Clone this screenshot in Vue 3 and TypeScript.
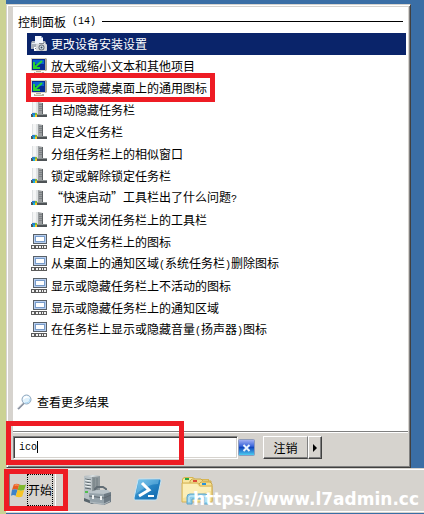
<script setup lang="ts">
import { computed, ref } from 'vue'

type IconKind = 'printer' | 'monitor' | 'tower' | 'tray'

interface ResultItem {
  label: string
  icon: IconKind
  marked?: boolean
}

interface TextPart {
  text: string
  narrow: boolean
}

const query = ref('ico')
const selected = ref(0)

const items: ResultItem[] = [
  { label: '更改设备安装设置', icon: 'printer' },
  { label: '放大或缩小文本和其他项目', icon: 'monitor' },
  { label: '显示或隐藏桌面上的通用图标', icon: 'monitor', marked: true },
  { label: '自动隐藏任务栏', icon: 'tower' },
  { label: '自定义任务栏', icon: 'tower' },
  { label: '分组任务栏上的相似窗口', icon: 'tower' },
  { label: '锁定或解除锁定任务栏', icon: 'tower' },
  { label: '“快速启动”工具栏出了什么问题?', icon: 'tower' },
  { label: '打开或关闭任务栏上的工具栏', icon: 'tower' },
  { label: '自定义任务栏上的图标', icon: 'tray' },
  { label: '从桌面上的通知区域(系统任务栏)删除图标', icon: 'tray' },
  { label: '显示或隐藏任务栏上不活动的图标', icon: 'tray' },
  { label: '显示或隐藏任务栏上的通知区域', icon: 'tray' },
  { label: '在任务栏上显示或隐藏音量(扬声器)图标', icon: 'tray' },
]

// Half-width characters are set in a monospaced face beside the full-width ones.
function split(label: string): TextPart[] {
  return (label.match(/[\x20-\x7e]+|[^\x20-\x7e]+/g) ?? []).map((text) => ({
    text,
    narrow: /^[\x20-\x7e]/.test(text),
  }))
}

const rows = computed(() => items.map((item) => ({ ...item, parts: split(item.label) })))
</script>

<template>
  <div class="desktop">
    <main class="start-menu">
      <section class="results">
        <h1 class="group-title">
          <span>控制面板</span>
          <span class="narrow">({{ items.length }})</span>
          <span class="rule"></span>
        </h1>
        <ul class="list">
          <li v-for="(row, index) in rows" :key="row.label" class="item">
            <button type="button" class="row" :class="{ selected: index === selected }" @click="selected = index">
              <svg v-if="row.icon === 'printer'" class="icon" viewBox="0 0 16 16" aria-hidden="true">
                <path d="M4 0h6l2 2v5H4z" fill="#f4f8ff" />
                <path d="M10 0v2h2z" fill="#9db4d4" />
                <path d="M1 5h3v2h8V5h2l1 2v6H0V7z" fill="#a9b0ba" />
                <path d="M1 7h13v1H1z" fill="#e9edf2" />
                <path d="M3 11h6v4H3z" fill="#fff" />
                <path d="M4 12h3v1H4z" fill="#748397" />
                <rect x="5" y="8" width="11" height="7" rx="1" fill="#d7d9dc" />
                <path d="M8 7h5v1H8z" fill="#828890" />
                <circle cx="10.500" cy="11.500" r="3" fill="#69717b" />
                <circle cx="10.500" cy="11.500" r="2" fill="#d5e5f1" />
                <circle cx="10.500" cy="11.500" r="1" fill="#37434f" />
              </svg>
              <svg v-else-if="row.icon === 'monitor'" class="icon" viewBox="0 0 16 16" aria-hidden="true">
                <path d="M0 0h15l1 1v11l-1 1H1l-1-1z" fill="#d5d1bd" />
                <path d="M14 0l2 1v11l-2 1z" fill="#aaa796" />
                <path d="M1 1h13v11H1z" fill="#072b94" />
                <path d="M2 2h11v4H2z" fill="#0a62d0" />
                <path d="M3 4v6h6M4 9l7-6" fill="none" stroke="#2bd52f" stroke-width="2" />
                <path d="M5 13h5v1h3v2H3v-2h2z" fill="#b5b19e" />
                <path d="M4 14h7v1H4z" fill="#ebe8d8" />
              </svg>
              <svg v-else-if="row.icon === 'tower'" class="icon" viewBox="0 0 16 16" aria-hidden="true">
                <path d="M1 0h6v13H1z" fill="#dfe2e3" />
                <path d="M2 0h3v10H2z" fill="#f5f6f6" />
                <path d="M7 0l5 1v12H7z" fill="#9a9ea0" />
                <path d="M8 2h3v1H8zM8 4h3v1H8zM8 6h3v1H8zM8 8h3v1H8z" fill="#7d8184" />
                <path d="M11 1h1v11h-1z" fill="#5e6265" />
                <path d="M0 12h16v3H0z" fill="#4e5356" />
                <path d="M6 12h10v1H6z" fill="#8e9495" />
                <path d="M1 11h3v2H1z" fill="#267fce" />
                <path d="M4 11h2v2H4z" fill="#83bd32" />
                <path d="M2 13h2v2H2z" fill="#14b5e0" />
                <path d="M4 13h2v2H4z" fill="#f8c629" />
              </svg>
              <svg v-else class="icon" viewBox="0 0 16 16" aria-hidden="true">
                <path d="M2 0h14v10H2z" fill="#596169" />
                <path d="M3 1h12v8H3z" fill="#b8cff0" />
                <path d="M4 2h10v6H4z" fill="#789cca" />
                <path d="M5 3h8v4H5z" fill="#fff" />
                <path d="M0 11h16v4H0z" fill="#5b5b5b" />
                <path d="M1 12h2v2H1zM5 12h2v2H5zM8 12h2v2H8zM11 12h1v2h-1zM13 12h2v2h-2z" fill="#f1f1f1" />
              </svg>
              <span class="label"><span v-for="(part, n) in row.parts" :key="n" :class="{ narrow: part.narrow }">{{ part.text }}</span></span>
            </button>
            <span v-if="row.marked" class="mark mark-item"></span>
          </li>
        </ul>
        <a class="more" href="#more">
          <svg class="icon" viewBox="0 0 16 16" aria-hidden="true">
            <path d="M1 15l6-6" stroke="#8992a1" stroke-width="2" />
            <path d="M1 14l5-5" stroke="#c7c9ce" />
            <circle cx="9.500" cy="5.500" r="4.500" fill="#dff1fc" stroke="#8fa6bd" />
            <path d="M6 6c0-5 6-5 6-2C9 3 8 5 6 6z" fill="#fff" />
            <path d="M8 9c3 0 5-1 5-4" fill="none" stroke="#a4d3f2" />
          </svg>
          <span>查看更多结果</span>
        </a>
      </section>

      <footer class="menu-footer">
        <div class="search">
          <input v-model="query" class="search-input" type="text" aria-label="搜索" />
          <span class="caret"></span>
        </div>
        <button type="button" class="clear" aria-label="清除" @click="query = ''">
          <svg viewBox="0 0 17 17" aria-hidden="true">
            <defs>
              <linearGradient id="clear-fill" x2="0" y2="1">
                <stop offset="0" stop-color="#a9b4f3" />
                <stop offset=".4" stop-color="#3e68dc" />
                <stop offset=".5" stop-color="#1247bd" />
                <stop offset="1" stop-color="#50d4f4" />
              </linearGradient>
            </defs>
            <rect x=".5" y=".5" width="16" height="16" rx="1" fill="url(#clear-fill)" stroke="#8d9bbb" />
            <path d="M5.500 6l6 6M11.500 6l-6 6" stroke="#e9f3ff" stroke-width="2" />
          </svg>
        </button>
        <div class="logoff">
          <button type="button" class="raised logoff-main">注销</button>
          <button type="button" class="raised logoff-more" aria-label="更多选项">
            <svg viewBox="0 0 4 8" aria-hidden="true"><path d="M0 0l4 4-4 4z" fill="#000" /></svg>
          </button>
        </div>
        <span class="mark mark-search"></span>
      </footer>
    </main>

    <nav class="taskbar" aria-label="任务栏">
      <div class="start-wrap">
        <button type="button" class="start">
          <svg class="flag" viewBox="0 0 16 16" aria-hidden="true">
            <path d="M3 2c2-1 4-1 6 0L7 8c-2-1-4-1-6 0z" fill="#e85e22" />
            <path d="M9 2c2 1 5 1 7 0l-2 6c-2 1-5 1-7 0z" fill="#7eb82d" />
            <path d="M1 8c2-1 4-1 6 0l-2 6c-2-1-3-1-5 0z" fill="#3c83ca" />
            <path d="M7 8c2 1 5 1 7 0l-2 7c-2 1-5 1-7 0z" fill="#f6c528" />
            <path d="M4 3c2-1 3 0 4 0" stroke="#ffb080" fill="none" />
          </svg>
          <span class="start-text">开始</span>
        </button>
        <span class="mark mark-start"></span>
      </div>

      <div class="launchers">
        <button type="button" class="launcher" aria-label="服务器管理器">
          <svg viewBox="0 0 32 32" aria-hidden="true">
            <path d="M3 2l9-1 7 1v25l-8 2-8-2z" fill="#8e979b" />
            <path d="M3 2l8 1v26l-8-2z" fill="#b9c1c5" />
            <path d="M3 2l9-1 7 1-8 1z" fill="#dce2e4" />
            <path d="M4 5l6 1M4 8l6 1M4 11l6 1M4 14l6 1" stroke="#59656b" />
            <path d="M4 6l6 1M4 9l6 1M4 12l6 1" stroke="#eef3f4" />
            <path d="M4 17h3v2H4z" fill="#53bd4e" />
            <path d="M13 4v14M16 4v14" stroke="#737e83" />
            <path d="M3 24l8 3 8-2v2l-8 3-8-3z" fill="#59656c" />
            <path d="M14 18v-3l2-2h6l3 2v3" fill="none" stroke="#626d75" stroke-width="2" />
            <path d="M9 18l6-2h12l3 3-6 3H10z" fill="#b9c3c9" />
            <path d="M8 19l15 1v11L9 29z" fill="#95a2aa" />
            <path d="M23 20l7-2v10l-7 3z" fill="#6d7a84" />
            <path d="M8 22l15 2 7-3" fill="none" stroke="#5e6971" />
            <path d="M11 21h2v4h-2zM19 22h2v4h-2z" fill="#eef1f2" />
            <path d="M9 28l14 2 6-3" fill="none" stroke="#b0babf" />
          </svg>
        </button>
        <button type="button" class="launcher" aria-label="PowerShell">
          <svg viewBox="0 0 32 32" aria-hidden="true">
            <defs>
              <linearGradient id="shell-fill" x2="1" y2="1">
                <stop offset="0" stop-color="#77c6ed" />
                <stop offset=".5" stop-color="#2683c3" />
                <stop offset="1" stop-color="#0c62a9" />
              </linearGradient>
            </defs>
            <path d="M8 5h21q1 0 1 2l-4 18q0 1-2 1H4q-1 0-1-2L7 6q0-1 1-1z" fill="url(#shell-fill)" stroke="#c5e5f5" />
            <path d="M8 6h20l-1 4C20 10 14 13 5 20z" fill="#8ed3f3" opacity=".4" />
            <path d="M11 9l7 7-10 6" fill="none" stroke="#fff" stroke-width="3" />
            <path d="M17 22h6" stroke="#fff" stroke-width="2" />
          </svg>
        </button>
        <button type="button" class="launcher" aria-label="资源管理器">
          <svg viewBox="0 0 32 32" aria-hidden="true">
            <path d="M1 5l2-2h9l2 2h14v20H1z" fill="#d8b652" />
            <path d="M2 5l2-1h8l2 2h13v17H2z" fill="#f8e6a0" />
            <path d="M4 4h4v2H4z" fill="#27a943" />
            <path d="M9 7l2-2h9l2 2h8v18H9z" fill="#f3da8a" stroke="#caa84b" />
            <path d="M12 6h4v2h-4z" fill="#dc4936" />
            <path d="M18 10l2-2h9l2 2v17H18z" fill="#f7df8d" stroke="#caa84b" />
            <path d="M21 9h4v2h-4z" fill="#2892da" />
            <path d="M1 9h16l2 3h12v16H1z" fill="#f6e29a" stroke="#d4b257" />
            <path d="M2 10h14l2 3h12v4L2 24z" fill="#fbeeb8" />
            <path d="M6 30v-7q0-3 3-3h15q3 0 3 3v7h-5v-5H11v5z" fill="#8ccce8" stroke="#5fa4c9" />
            <path d="M8 28v-5q0-1 2-1h13q2 0 2 1v5" fill="none" stroke="#d6f2ff" />
          </svg>
        </button>
      </div>
      <span class="watermark">https://www.l7admin.cc</span>
    </nav>
  </div>
</template>

<style>
body {
  margin: 0;
  background: #3a6ea5;
}
</style>

<style scoped>
.desktop {
  --face: #d6d3ce;
  --red: #ee1c24;
  box-sizing: border-box;
  min-height: 100vh;
  display: flex;
  flex-direction: column;
  border-left: 6px solid #cbd294;
  background: #3a6ea5;
  padding-top: 4px;
  color: #000;
  font-family: "Noto Sans CJK SC", sans-serif;
  font-size: 12px;
  line-height: 16px;
}

button {
  box-sizing: border-box;
  margin: 0;
  padding: 0;
  border: 0;
  background: none;
  color: inherit;
  font: inherit;
}

svg {
  display: block;
}

.narrow {
  font-family: "Liberation Mono", monospace;
  font-size: 10px;
}

.icon {
  flex: none;
  width: 16px;
  height: 16px;
}

.start-menu {
  flex: 1;
  display: flex;
  flex-direction: column;
  margin-right: 13px;
  border: 1px solid var(--face);
  border-right-color: #404040;
  border-bottom-color: #404040;
  box-shadow: inset 1px 1px #fff, inset -1px -1px #808080;
  background: var(--face);
  padding: 2px 2px 1px 6px;
}

.results {
  flex: 1;
  display: flex;
  flex-direction: column;
  background: #fff;
  border-bottom: 1px solid #808080;
  padding-bottom: 18px;
}

.group-title {
  box-sizing: border-box;
  display: flex;
  align-items: center;
  height: 26px;
  margin: 0;
  padding: 3px 5px 0;
  font-size: 12px;
  font-weight: 400;
}

.group-title .narrow {
  margin-left: 6px;
}

.rule {
  flex: 1;
  height: 1px;
  margin-left: 6px;
  background: #000;
}

.list {
  flex: 1;
  margin: 0;
  padding: 0 2px 0 14px;
  list-style: none;
}

.item {
  position: relative;
}

.row {
  display: flex;
  align-items: center;
  gap: 4px;
  width: 100%;
  height: 22px;
  padding: 0 4px;
  text-align: left;
  white-space: nowrap;
}

.row.selected {
  background: #0a246a;
  color: #fff;
}

.mark {
  position: absolute;
  box-sizing: border-box;
  border: 5px solid var(--red);
  pointer-events: none;
}

.mark-item {
  top: -4px;
  left: -1px;
  width: 189px;
  height: 29px;
}

.more {
  display: flex;
  align-items: center;
  gap: 4px;
  height: 22px;
  padding: 0 4px;
  color: #000;
  text-decoration: none;
}

.menu-footer {
  position: relative;
  display: flex;
  align-items: center;
  height: 29px;
  border-top: 1px solid #fff;
  padding-bottom: 4px;
}

.search {
  position: relative;
  flex: 0 1 225px;
  min-width: 0;
}

.search-input {
  display: block;
  box-sizing: border-box;
  width: 100%;
  height: 23px;
  border: 1px solid #808080;
  border-right-color: #fff;
  border-bottom-color: #fff;
  border-radius: 0;
  box-shadow: inset 1px 1px #404040, inset -1px -1px var(--face);
  background: #fff;
  padding: 0 5px;
  outline: none;
  font: 10px/16px "Liberation Mono", monospace;
}

.caret {
  position: absolute;
  top: 5px;
  left: 24px;
  width: 1px;
  height: 12px;
  background: #000;
}

.clear {
  width: 17px;
  height: 17px;
}

.logoff {
  display: flex;
  margin-left: 8px;
}

.raised {
  height: 23px;
  border: 1px solid #fff;
  border-right-color: #404040;
  border-bottom-color: #404040;
  box-shadow: inset -1px -1px #808080;
  background: var(--face);
}

.logoff-main {
  width: 45px;
  border-right-color: #808080;
  box-shadow: inset 0 -1px #808080;
}

.logoff-more {
  display: flex;
  align-items: center;
  justify-content: center;
  width: 14px;
}

.logoff-more svg {
  width: 4px;
  height: 8px;
}

.mark-search {
  top: -12px;
  left: -7px;
  width: 178px;
  height: 44px;
}

.taskbar {
  position: relative;
  display: flex;
  align-items: center;
  height: 42px;
  border-top: 1px solid var(--face);
  border-bottom: 1px solid #fff;
  box-shadow: inset 0 1px #fff, 0 1px var(--face);
  background: var(--face);
  margin-bottom: 2px;
}

.start-wrap {
  position: relative;
  padding-left: 3px;
}

.start {
  display: flex;
  align-items: center;
  gap: 1px;
  width: 47px;
  height: 36px;
  border: 1px solid #808080;
  border-right-color: #fff;
  border-bottom-color: #fff;
  padding-left: 1px;
}

.flag {
  flex: none;
  width: 15px;
  height: 16px;
}

.start-text {
  border: 1px dotted #000;
  line-height: 30px;
  white-space: nowrap;
}

.mark-start {
  top: -3px;
  left: -2px;
  width: 64px;
  height: 42px;
}

.launchers {
  display: flex;
  gap: 18px;
  margin-left: 25px;
}

.launcher {
  width: 32px;
  height: 32px;
}

.watermark {
  position: absolute;
  right: 5px;
  bottom: 0;
  color: #fff;
  font: bold 17px/24px "DejaVu Sans", sans-serif;
  pointer-events: none;
}
</style>
